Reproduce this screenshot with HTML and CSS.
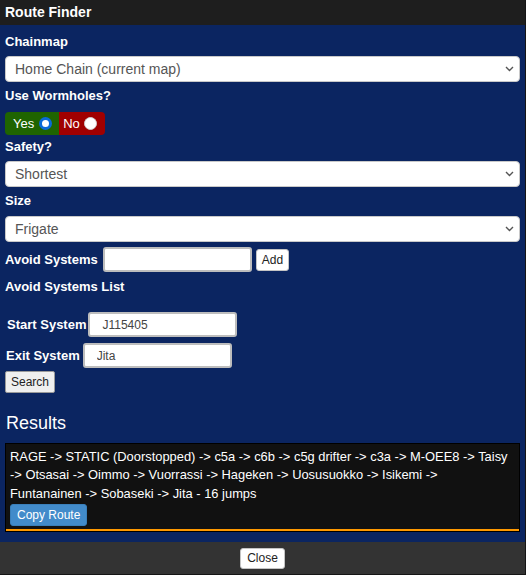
FILE: index.html
```html
<!DOCTYPE html>
<html>
<head>
<meta charset="utf-8">
<title>Route Finder</title>
<link rel="stylesheet" href="styles.css">
</head>
<body>
<div class="dialog">
  <div class="titlebar">Route Finder</div>
  <div class="content">
    <label class="lbl lbl-chain">Chainmap</label>
    <div class="sel-wrap">
      <select class="sel"><option>Home Chain (current map)</option></select>
      <svg class="chev" width="9" height="6" viewBox="0 0 9 6"><path d="M1 1 L4.5 4.5 L8 1" fill="none" stroke="#555" stroke-width="1.4"/></svg>
    </div>

    <label class="lbl lbl-wh">Use Wormholes?</label>
    <div class="toggle">
      <span class="opt opt-yes">Yes<span class="radio checked"></span></span>
      <span class="opt opt-no">No<span class="radio"></span></span>
    </div>

    <label class="lbl lbl-safety">Safety?</label>
    <div class="sel-wrap">
      <select class="sel"><option>Shortest</option></select>
      <svg class="chev" width="9" height="6" viewBox="0 0 9 6"><path d="M1 1 L4.5 4.5 L8 1" fill="none" stroke="#555" stroke-width="1.4"/></svg>
    </div>

    <label class="lbl lbl-size">Size</label>
    <div class="sel-wrap">
      <select class="sel"><option>Frigate</option></select>
      <svg class="chev" width="9" height="6" viewBox="0 0 9 6"><path d="M1 1 L4.5 4.5 L8 1" fill="none" stroke="#555" stroke-width="1.4"/></svg>
    </div>

    <div class="row row-avoid">
      <label class="lbl-inline">Avoid Systems</label>
      <input class="txt" type="text" value="">
      <button class="btn-white">Add</button>
    </div>

    <label class="lbl lbl-list">Avoid Systems List</label>

    <div class="row row-start">
      <label class="lbl-inline lbl-start">Start System</label>
      <input class="txt" type="text" value="J115405">
    </div>
    <div class="row row-exit">
      <label class="lbl-inline lbl-exit">Exit System</label>
      <input class="txt" type="text" value="Jita">
    </div>
    <button class="btn-search">Search</button>

    <h3 class="results-title">Results</h3>
    <div class="result-box">
      <div class="route">RAGE -&gt; STATIC (Doorstopped) -&gt; c5a -&gt; c6b -&gt; c5g drifter -&gt; c3a -&gt; M-OEE8 -&gt; Taisy -&gt; Otsasai -&gt; Oimmo -&gt; Vuorrassi -&gt; Hageken -&gt; Uosusuokko -&gt; Isikemi -&gt; Funtanainen -&gt; Sobaseki -&gt; Jita - 16 jumps</div>
      <button class="btn-copy">Copy Route</button>
    </div>
  </div>
  <div class="footer"><button class="btn-white btn-close">Close</button></div>
</div>
</body>
</html>
```

FILE: styles.css
```css
html, body {
  margin: 0;
  padding: 0;
  background: #151515;
}
body {
  font-family: "Liberation Sans", Arial, sans-serif;
  color: #fff;
}
.dialog {
  width: 525px;
  height: 574px;
  display: flex;
  flex-direction: column;
  background: #0b2561;
}
.titlebar {
  height: 25px;
  line-height: 25px;
  padding-left: 5px;
  background: #1e1e1e;
  font-size: 14px;
  font-weight: bold;
}
.content {
  flex: 1;
  padding: 9px 5px 10px 5px;
  display: flex;
  flex-direction: column;
  align-items: flex-start;
}
.lbl {
  display: block;
  font-size: 13px;
  font-weight: bold;
  line-height: 16px;
}
.lbl-chain { margin-bottom: 6px; }
.lbl-wh { margin-top: 6px; margin-bottom: 8px; }
.lbl-safety { margin-top: 4px; margin-bottom: 6px; }
.lbl-size { margin-top: 6px; margin-bottom: 7px; }
.lbl-list { margin-top: 7px; }

.sel-wrap {
  position: relative;
  width: 515px;
  height: 26px;
}
.sel {
  display: block;
  -webkit-appearance: none;
  appearance: none;
  width: 515px;
  height: 26px;
  margin: 0;
  padding: 0 0 0 9px;
  border: 1px solid #c9c9c9;
  border-radius: 4px;
  background: #fff;
  color: #555;
  font-family: "Liberation Sans", Arial, sans-serif;
  font-size: 14px;
}
.chev {
  position: absolute;
  right: 6px;
  top: 10px;
  pointer-events: none;
}

.toggle {
  display: flex;
  height: 23px;
  border-radius: 4px;
  overflow: hidden;
}
.opt {
  display: flex;
  align-items: center;
  font-size: 13px;
  color: #fff;
}
.opt-yes {
  background: #1f6400;
  padding: 0 7px 0 8px;
  gap: 5px;
}
.opt-no {
  background: #a00000;
  padding: 0 8px 0 4px;
  gap: 4px;
}
.radio {
  box-sizing: border-box;
  width: 13px;
  height: 13px;
  border-radius: 50%;
  background: #fff;
  border: 1px solid #d0d0d0;
}
.radio.checked {
  border: 3px solid #0a6ad8;
}

.row {
  display: flex;
  align-items: center;
}
.row-avoid { margin-top: 5px; gap: 5px; }
.row-avoid .btn-white { margin-left: -1px; }
.row-start { margin-top: 17px; gap: 2px; }
.row-exit { margin-top: 6px; gap: 3px; }
.lbl-inline {
  font-size: 13px;
  font-weight: bold;
  line-height: 16px;
}
.lbl-start { padding-left: 2px; }
.lbl-exit { padding-left: 1px; }

.txt {
  box-sizing: border-box;
  width: 149px;
  height: 25px;
  margin: 0;
  padding: 0 0 0 12px;
  border: 2px solid #bdbdbd;
  border-radius: 3px;
  background: #fff;
  color: #444;
  font-family: "Liberation Sans", Arial, sans-serif;
  font-size: 12px;
}

.btn-white {
  box-sizing: border-box;
  height: 22px;
  padding: 0 5px;
  margin: 0;
  border: 1px solid #c4c4c4;
  border-radius: 3px;
  background: #fff;
  color: #222;
  font-family: "Liberation Sans", Arial, sans-serif;
  font-size: 12px;
}
.btn-search {
  box-sizing: border-box;
  margin: 3px 0 0 0;
  height: 22px;
  padding: 0 5px;
  border: 1px solid #9a9a9a;
  border-radius: 2px;
  background: #efefef;
  color: #222;
  font-family: "Liberation Sans", Arial, sans-serif;
  font-size: 12px;
}

.results-title {
  margin: 20px 0 0 1px;
  font-size: 18px;
  font-weight: normal;
  line-height: 20px;
}
.result-box {
  align-self: stretch;
  margin-top: 10px;
  border: 1px solid #000;
  background: #111;
  padding: 4px 8.5px 5px 4px;
  box-shadow: inset 0 -2px 0 #ff9900;
}
.route {
  font-size: 12.9px;
  line-height: 18.3px;
}
.btn-copy {
  display: block;
  margin: 1px 0 0 0;
  height: 22px;
  padding: 0 6px;
  border: 1px solid #3a7fba;
  border-radius: 3px;
  background: #428bca;
  color: #fff;
  font-family: "Liberation Sans", Arial, sans-serif;
  font-size: 12px;
}

.footer {
  height: 32px;
  background: #333;
  display: flex;
  align-items: center;
  justify-content: center;
}
.btn-close {
  height: 21px;
  padding: 0 6px;
}
```
